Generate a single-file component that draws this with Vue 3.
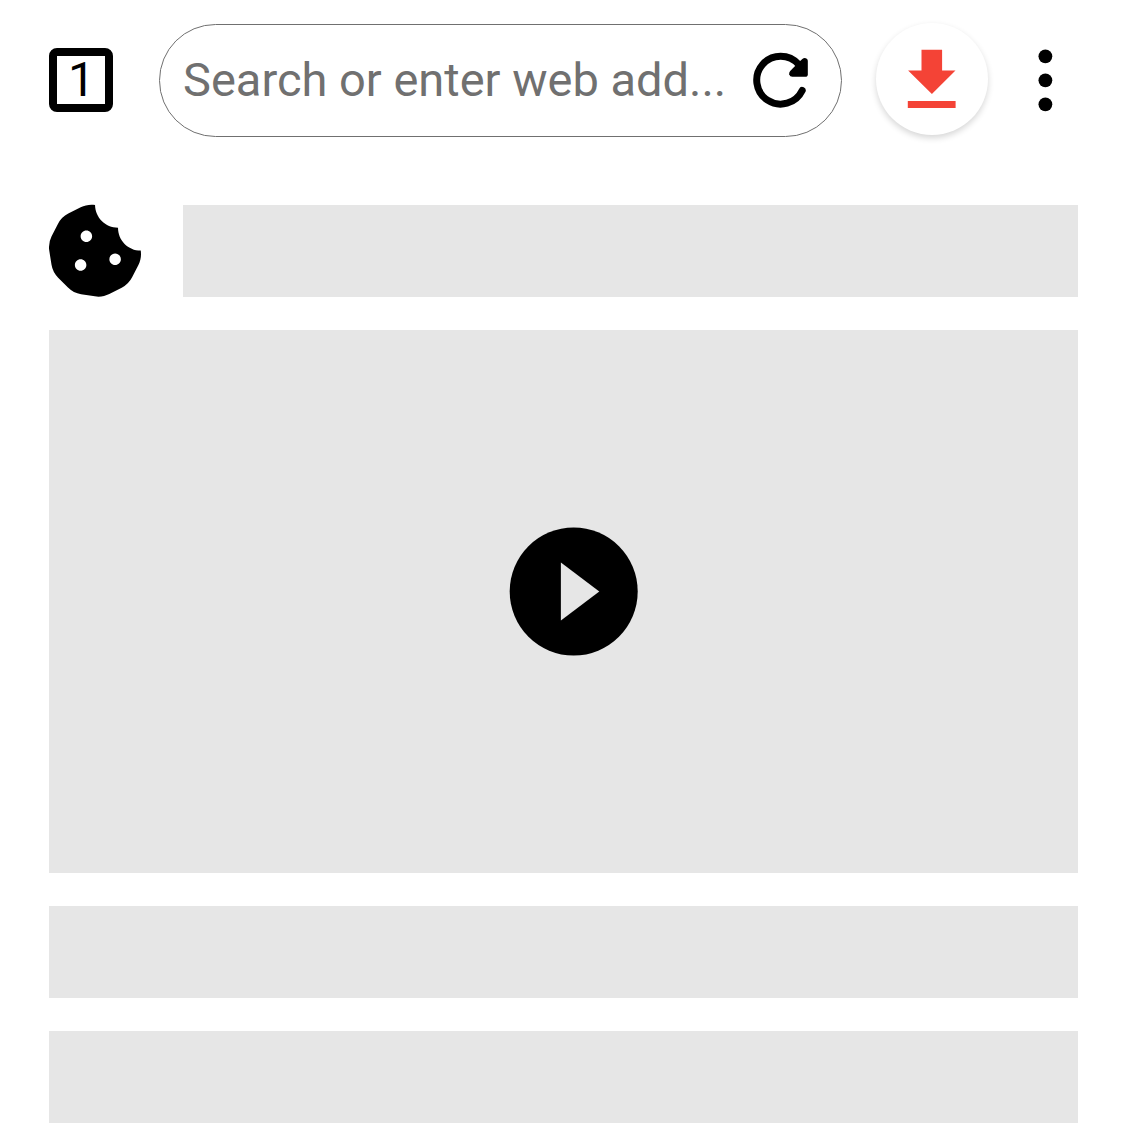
<script setup>
const placeholder = 'Search or enter web add...'
</script>

<template>
  <main class="browser">
    <header class="toolbar">
      <button class="tabs" aria-label="Tabs"><span class="count">1</span></button>
      <div class="address">
        <span class="hint">{{ placeholder }}</span>
        <svg class="reload" width="58" height="58" viewBox="0 0 58 58">
          <path d="M50.2 38.5A23.9 23.9 0 1 1 46.6 12.4" fill="none" stroke="#000" stroke-width="7" stroke-linecap="round" />
          <path d="M46.8 10.2L50.3 6.9Q51.6 5.8 53 5.9Q55.8 6.4 55.8 9V22.2Q55.8 24.8 53.2 24.8H40.4Q38 24.6 37.2 22.4Q36.8 20.4 38.2 18.9Z" />
        </svg>
      </div>
      <button class="download" aria-label="Download">
        <svg width="48" height="60" viewBox="0 0 48 60">
          <path fill="#f44336" d="M13.5 .7H34.1V21.4H47.5L23.9 45.1L.1 21.4H13.5ZM-.2 52.1H47.6V58.9H-.2Z" />
        </svg>
      </button>
      <svg class="more" width="15" height="64" viewBox="0 0 15 64">
        <circle cx="7.4" cy="8.3" r="6.9" />
        <circle cx="7.4" cy="32.3" r="6.9" />
        <circle cx="7.4" cy="56.3" r="6.9" />
      </svg>
    </header>
    <section class="page">
      <div class="title-row">
        <svg width="92" height="92" viewBox="0 2 512 512">
          <path d="M510.52 255.82c-69.97-.85-126.47-57.69-126.47-127.86-70.17 0-127-56.49-127.86-126.45-27.26-4.14-55.13.3-79.72 12.82l-69.13 35.22a132.221 132.221 0 0 0-57.79 57.81l-35.1 68.88a132.645 132.645 0 0 0-12.82 80.95l12.08 76.27a132.521 132.521 0 0 0 37.16 72.96l54.77 54.76a132.036 132.036 0 0 0 72.71 37.06l76.71 12.15c27.51 4.36 55.7-.11 80.53-12.76l69.13-35.21a132.273 132.273 0 0 0 57.79-57.81l35.1-68.88c12.56-24.64 17.01-52.58 12.91-79.91zM176 368c-17.67 0-32-14.33-32-32s14.33-32 32-32 32 14.33 32 32-14.33 32-32 32zm32-160c-17.67 0-32-14.33-32-32s14.33-32 32-32 32 14.33 32 32-14.33 32-32 32zm160 128c-17.67 0-32-14.33-32-32s14.33-32 32-32 32 14.33 32 32-14.33 32-32 32z" />
        </svg>
        <div class="block heading"></div>
      </div>
      <div class="block video">
        <svg width="130" height="130" viewBox="0 0 130 130">
          <circle cx="64.7" cy="64.5" r="64" />
          <path d="M51.9 35.6L90.3 64.5L51.9 93.4Z" fill="#e6e6e6" />
        </svg>
      </div>
      <div class="block line"></div>
      <div class="block line"></div>
    </section>
  </main>
</template>

<style>
body {
  margin: 0;
  background: #fff;
}
</style>

<style scoped>
.browser {
  box-sizing: border-box;
  height: 1123px;
  overflow: hidden;
  font-family: Roboto, sans-serif;
}
svg {
  display: block;
  flex: none;
  overflow: visible;
}
button {
  box-sizing: border-box;
  flex: none;
  display: flex;
  align-items: center;
  justify-content: center;
  padding: 0;
  font: inherit;
  color: #000;
  background: #fff;
}
.toolbar {
  display: flex;
  align-items: flex-start;
  height: 181px;
  padding: 24px 49px 0;
  box-sizing: border-box;
}
.tabs {
  width: 64px;
  height: 64px;
  margin-top: 24px;
  border: 8px solid #000;
  border-radius: 8px;
}
.count {
  padding-left: 1px;
  font-size: 48px;
  line-height: 48px;
  font-weight: 400;
}
.address {
  box-sizing: border-box;
  flex: none;
  display: flex;
  align-items: center;
  width: 683px;
  height: 113px;
  margin-left: 46px;
  padding-left: 23px;
  border: 1px solid #707070;
  border-radius: 57px;
}
.hint {
  width: 569px;
  padding-bottom: 2px;
  font-size: 47px;
  line-height: 56px;
  white-space: nowrap;
  color: #707070;
}
.download {
  width: 112px;
  height: 112px;
  margin: -1px 0 0 34px;
  border: 0;
  border-radius: 50%;
  box-shadow: 0 3px 6px rgba(0, 0, 0, 0.16);
}
.more {
  margin: 24px 0 0 50px;
}
.page {
  display: flex;
  flex-direction: column;
  gap: 33px;
  padding: 24px 49px 0;
}
.title-row {
  display: flex;
  gap: 42px;
}
.block {
  background: #e6e6e6;
}
.heading {
  flex: 1;
  height: 92px;
}
.video {
  box-sizing: border-box;
  display: flex;
  align-items: center;
  justify-content: center;
  height: 543px;
  padding: 0 0 20px 20px;
}
.line {
  height: 92px;
}
</style>
